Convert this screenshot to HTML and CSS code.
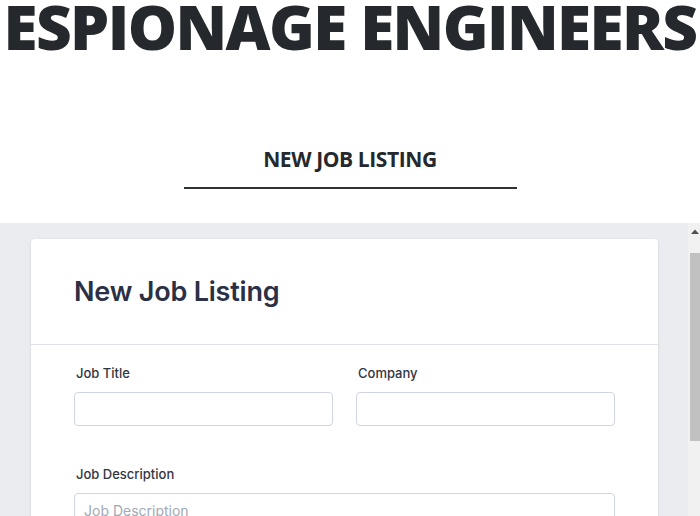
FILE: index.html
```html
<!DOCTYPE html>
<html lang="en">
<head>
<meta charset="utf-8">
<title>Espionage Engineers – New Job Listing</title>
<link rel="stylesheet" href="styles.css">
</head>
<body>
<header class="site-header">
  <h1 class="brand">ESPIONAGE ENGINEERS</h1>
  <h2 class="page-title">NEW JOB LISTING</h2>
  <div class="rule"></div>
</header>
<div class="frame">
  <div class="frame-inner">
    <section class="card">
      <div class="card-head">
        <h3 class="card-title">New Job Listing</h3>
      </div>
      <form class="card-body">
        <div class="row">
          <label class="field">
            <span class="label">Job Title</span>
            <input class="input" type="text">
          </label>
          <label class="field">
            <span class="label">Company</span>
            <input class="input" type="text">
          </label>
        </div>
        <label class="field">
          <span class="label">Job Description</span>
          <textarea class="input textarea" placeholder="Job Description"></textarea>
        </label>
      </form>
    </section>
  </div>
  <div class="scrollbar" aria-hidden="true">
    <div class="sb-button">
      <svg width="8" height="5" viewBox="0 0 8 5"><path d="M0 5 L4 0.5 L8 5 Z" fill="#505050"/></svg>
    </div>
    <div class="sb-track">
      <div class="sb-thumb"></div>
    </div>
  </div>
</div>
</body>
</html>
```
FILE: styles.css
```css
html, body {
  margin: 0;
  padding: 0;
  overflow: hidden;
  background: #ffffff;
}
body {
  width: 700px;
  height: 516px;
  font-family: "Open Sans", "Liberation Sans", sans-serif;
}
.site-header {
  display: flex;
  flex-direction: column;
  align-items: center;
}
.brand {
  margin: 0;
  font-family: "Open Sans", sans-serif;
  font-weight: 800;
  font-size: 62px;
  line-height: 52px;
  letter-spacing: -1.6px;
  color: #25282c;
  white-space: nowrap;
}
.page-title {
  margin: 97px 0 0;
  font-family: "Open Sans", sans-serif;
  font-weight: 700;
  font-size: 21px;
  line-height: 20px;
  letter-spacing: -0.4px;
  color: #25282c;
}
.rule {
  margin-top: 18px;
  width: 333px;
  height: 2px;
  background: #2f3236;
}
.frame {
  margin-top: 34px;
  display: flex;
  height: 320px;
  background: #ebecf0;
}
.frame-inner {
  width: 688px;
  flex: none;
  box-sizing: border-box;
  padding: 16px 30px 16px 31px;
}
.card {
  background: #ffffff;
  border-radius: 4px;
  box-shadow: 0 1px 3px rgba(30, 35, 60, 0.12);
  font-family: Inter, "Liberation Sans", sans-serif;
}
.card-head {
  height: 105px;
  display: flex;
  align-items: center;
  padding: 0 43px;
  border-bottom: 1px solid #e2e3ea;
}
.card-title {
  margin: 0;
  font-size: 27px;
  font-weight: 600;
  color: #2c3045;
  letter-spacing: -0.2px;
}
.card-body {
  display: flex;
  flex-direction: column;
  gap: 40px;
  padding: 20px 43px 40px;
}
.row {
  display: grid;
  grid-template-columns: 1fr 1fr;
  gap: 23px;
}
.field {
  display: flex;
  flex-direction: column;
  gap: 11px;
}
.label {
  font-size: 13px;
  line-height: 16px;
  font-weight: 500;
  color: #33353f;
  padding-left: 2px;
}
.input {
  box-sizing: border-box;
  height: 34px;
  border: 1px solid #cfd5e2;
  border-radius: 4px;
  background: #fff;
  font-family: Inter, "Liberation Sans", sans-serif;
  font-size: 14px;
  padding: 0 9px;
  margin: 0;
  outline: none;
}
.textarea {
  height: 100px;
  padding: 8px 9px;
  resize: none;
  color: #3b3d48;
}
.textarea::placeholder {
  color: #a3a8b6;
}
.scrollbar {
  flex: none;
  width: 15px;
  display: flex;
  flex-direction: column;
  background: #f1f1f1;
}
.sb-button {
  height: 15px;
  display: flex;
  align-items: center;
  justify-content: flex-start;
  padding-left: 3px;
  padding-top: 1px;
  box-sizing: border-box;
}
.sb-track {
  flex: 1;
  padding: 15px 0 0 2px;
}
.sb-thumb {
  width: 10px;
  height: 188px;
  background: #c1c1c1;
}
```
